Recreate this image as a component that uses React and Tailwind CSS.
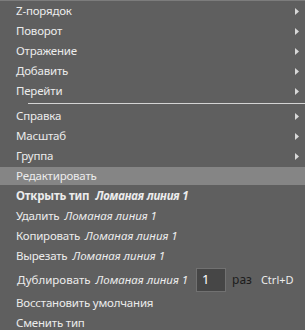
import React from "react";

const Arrow = () => (
  <svg width="4" height="7" viewBox="0 0 4 7" className="absolute right-[6px] top-[7px]">
    <polygon points="0,0 4,3.5 0,7" fill="#d8d8d8" />
  </svg>
);

const Row = ({ children, arrow, className = "" }) => (
  <div className={`relative h-[20px] flex items-center pl-4 ${className}`}>
    {children}
    {arrow && <Arrow />}
  </div>
);

const Name = ({ bold }) => (
  <span className={`italic ml-[5px] tracking-normal ${bold ? "font-bold" : ""}`}>Ломаная линия 1</span>
);

export default function App() {
  return (
    <div
      className="w-[305px] h-[330px] overflow-hidden bg-[#5f5f5f] border-t border-[#7c7c7c] text-[#ececec] text-[11.5px] tracking-[-0.2px] leading-none"
      style={{ fontFamily: '"Noto Sans", "Open Sans", sans-serif' }}
    >
      <Row arrow>Z-порядок</Row>
      <Row arrow>Поворот</Row>
      <Row arrow>Отражение</Row>
      <Row arrow>Добавить</Row>
      <Row arrow>Перейти</Row>
      <div className="h-[5px] flex items-center pl-[28px]">
        <div className="h-px w-full bg-[#d4d4d4]" />
      </div>
      <Row arrow>Справка</Row>
      <Row arrow>Масштаб</Row>
      <Row arrow>Группа</Row>
      <div className="h-[20px] py-px">
        <div className="h-[18px] bg-[#858585] flex items-center pl-4">Редактировать</div>
      </div>
      <Row className="font-bold">
        <span>Открыть тип</span>
        <span className="italic ml-[6px]">Ломаная линия 1</span>
      </Row>
      <Row>
        <span>Удалить</span>
        <Name />
      </Row>
      <Row>
        <span>Копировать</span>
        <Name />
      </Row>
      <Row>
        <span>Вырезать</span>
        <Name />
      </Row>
      <div className="h-[27px] flex items-center pl-[17px] tracking-normal">
        <span>Дублировать</span>
        <Name />
        <div className="ml-[8px] w-[30px] h-[24px] border border-[#717171] bg-[#464646] flex items-center pl-[5px] text-white text-[13px]">
          1
        </div>
        <span className="ml-[6px] text-[#1c1c1c] text-[12px]">раз</span>
        <span className="ml-[9px] text-[11px]">Ctrl+D</span>
      </div>
      <Row>Восстановить умолчания</Row>
      <Row>Сменить тип</Row>
    </div>
  );
}
